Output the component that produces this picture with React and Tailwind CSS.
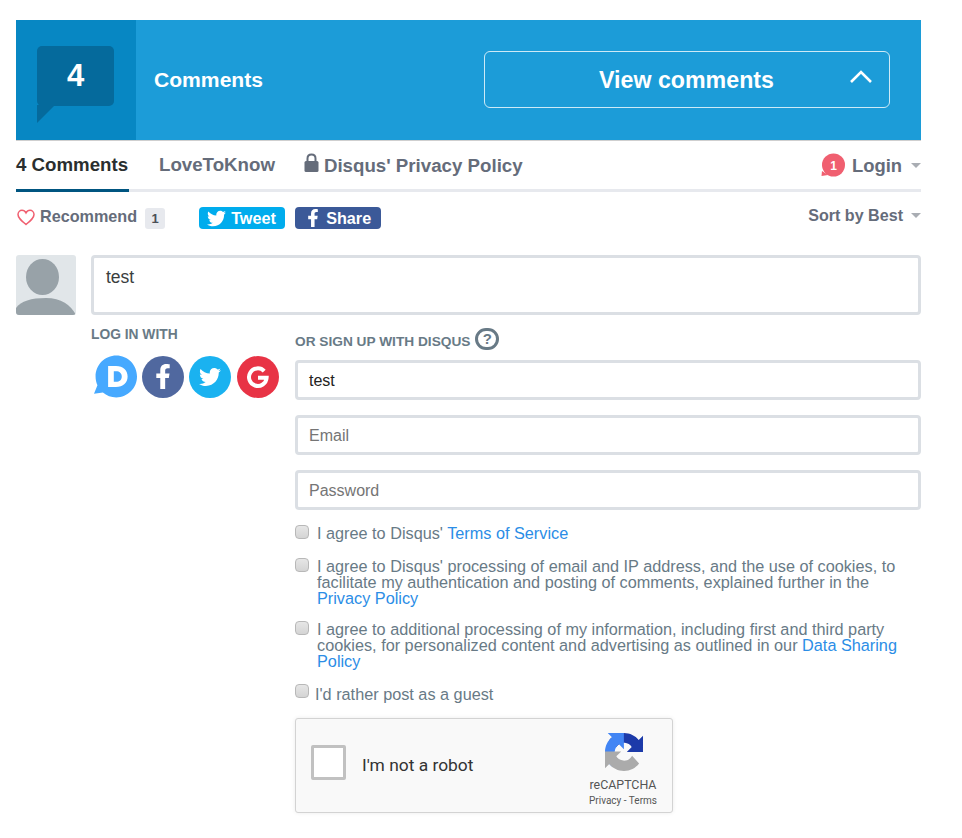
import React from "react";
import { FaTwitter, FaFacebookF } from "react-icons/fa";
import { SiDisqus } from "react-icons/si";

function Caret() {
  return <span className="w-0 h-0 border-x-[5px] border-x-transparent border-t-[5px] border-t-[#a9adb3] inline-block" />;
}

function Box() {
  return <span className="w-[14px] h-[14px] shrink-0 rounded-[4px] border border-[#b8b8b8] bg-gradient-to-b from-[#e6e6e6] to-[#d4d4d4]" />;
}

function Check({ children }) {
  return (
    <div className="flex items-start">
      <Box />
      <p className="ml-[8px] text-[16.25px] leading-[16px] text-[#687a86]">{children}</p>
    </div>
  );
}

const A = ({ children }) => <span className="text-[#2b8de6]">{children}</span>;

function Field({ placeholder, value }) {
  return (
    <div className={`h-[40px] border-[3px] border-[#dbdfe4] rounded-[4px] px-[11px] pt-[1px] flex items-center text-[16px] ${value ? "text-[#222]" : "text-[#757575]"}`}>
      {value || placeholder}
    </div>
  );
}

export default function App() {
  return (
    <div className="w-[962px] h-[838px] bg-white overflow-hidden pl-[16px] pt-[20px] font-['Liberation_Sans',Arial,sans-serif]">
      <div className="w-[905px]">
        <div className="h-[121px] bg-[#1c9cd8] border-b border-[#cfcfcf] flex items-stretch">
          <div className="w-[120px] h-[120px] bg-[#0787c3] pl-[21px] pt-[26px] shrink-0">
            <div className="relative w-[77px] h-[60px] bg-[#056a9c] rounded-[5px] flex items-center justify-center text-white font-bold text-[31px]">
              4
              <svg className="absolute left-0 top-[59px]" width="19" height="19" viewBox="0 0 19 19">
                <path d="M0 0H18L0 18Z" fill="#056a9c" />
              </svg>
            </div>
          </div>
          <div className="flex-1 flex items-center pl-[18px] pr-[31px] h-[120px]">
            <span className="text-white font-bold text-[21.1px]">Comments</span>
            <div className="ml-auto relative w-[406px] h-[57px] border border-[#cdeaf7] rounded-[6px] flex items-center justify-center pt-[2px] pr-[1px] text-white font-bold text-[23.2px] top-[-1px]">
              View comments
              <svg className="absolute right-[16px] top-[17px]" width="24" height="15" viewBox="0 0 24 15">
                <path d="M2 13L12 3L22 13" fill="none" stroke="white" strokeWidth="2.6" />
              </svg>
            </div>
          </div>
        </div>

        <div className="h-[51px] border-b-[3px] border-[#e7e9ee] flex items-start text-[18.7px] font-bold text-[#656c7a]">
          <div className="w-[113px] h-[51px] border-b-[3px] border-[#005580] text-[#2a2e2e] pt-[13px] leading-[21px] shrink-0 whitespace-nowrap">4 Comments</div>
          <div className="ml-[30px] pt-[13px] leading-[21px]">LoveToKnow</div>
          <div className="ml-[29px] pt-[14px] leading-[21px] flex">
            <svg width="15" height="20" viewBox="0 0 15 20" className="mt-[-2px] mr-[5px]">
              <path d="M3.500 9V5.500C3.500 3 5 1.500 7.500 1.500C10 1.500 11.500 3 11.500 5.500V9" fill="none" stroke="#656c7a" strokeWidth="2" />
              <rect x="0.500" y="8" width="14" height="11" rx="1.500" fill="#656c7a" />
            </svg>
            <span>Disqus' Privacy Policy</span>
          </div>
          <div className="ml-auto flex items-center pt-[12px] leading-[21px] text-[18.4px]">
            <svg width="24" height="24" viewBox="0 0 24 24" className="mr-[7px]">
              <circle cx="12.5" cy="12" r="11.500" fill="#f05f70" />
              <path d="M1 18L0.500 23L7 22Z" fill="#f05f70" />
              <text x="12.5" y="16.5" textAnchor="middle" fontSize="12" fontWeight="700" fill="white" fontFamily="Liberation Sans">1</text>
            </svg>
            <span>Login</span>
            <span className="ml-[9px] flex"><Caret /></span>
          </div>
        </div>

        <div className="h-[63px] flex items-start pt-[15px]">
          <svg width="18" height="17" viewBox="0 0 18 17" className="mt-[2px] ml-[1px]">
            <path d="M9 15.500C4 11.500 1 9 1 5.500C1 3 3 1.200 5 1.200C6.800 1.200 8.200 2.200 9 3.800C9.800 2.200 11.200 1.200 13 1.200C15 1.200 17 3 17 5.500C17 9 14 11.500 9 15.500Z" fill="none" stroke="#f05f70" strokeWidth="1.500" />
          </svg>
          <span className="ml-[5px] mt-[-1px] text-[16.2px] font-bold text-[#656c7a] leading-[20px]">Recommend</span>
          <span className="ml-[8px] mt-[1px] w-[20px] h-[21px] bg-[#e7e9ee] rounded-[3px] text-[13px] font-bold text-[#4a4f57] flex items-center justify-center">1</span>
          <div className="ml-[34px] w-[86px] h-[22px] rounded-[4px] bg-[#00aced] text-white font-bold text-[16.2px] flex items-center pl-[8px]">
            <FaTwitter className="w-[19px] h-[19px] mr-[5px]" />Tweet
          </div>
          <div className="ml-[10px] w-[86px] h-[22px] rounded-[4px] bg-[#3b5998] text-white font-bold text-[16.2px] flex items-center pl-[11px]">
            <FaFacebookF className="w-[14px] h-[18px] mr-[6px]" />Share
          </div>
          <div className="ml-auto flex items-center mt-[-1px] text-[16.1px] font-bold text-[#656c7a] leading-[18px]">
            <span>Sort by Best</span>
            <span className="ml-[8px] flex"><Caret /></span>
          </div>
        </div>

        <div className="flex">
          <div className="w-[60px] h-[60px] rounded-[3px] bg-[#e1e6e9] overflow-hidden shrink-0">
            <svg width="60" height="60" viewBox="0 0 60 60">
              <ellipse cx="26.500" cy="22" rx="16.500" ry="18" fill="#98a2a8" />
              <path d="M0 60V53C5 46 15 43 30 43C45 43 55 50 60 60Z" fill="#98a2a8" />
            </svg>
          </div>
          <div className="ml-[15px] flex-1">
            <div className="h-[60px] border-[3px] border-[#dbdfe4] rounded-[4px] px-[12px] pt-[10px] text-[17.5px] leading-[18px] text-[#3a3e3e]">test</div>
            <div className="flex">
              <div className="w-[204px] shrink-0 pt-[12px]">
                <div className="text-[13.8px] font-bold text-[#687a86] leading-[15px]">LOG IN WITH</div>
                <div className="flex mt-[13px] ml-[3px] gap-[5px] items-center">
                  <SiDisqus className="w-[43px] h-[43px] text-[#46a9ff]" />
                  <span className="w-[42px] h-[42px] rounded-full bg-[#50689f] text-white flex items-center justify-center"><FaFacebookF className="w-[24px] h-[25px]" /></span>
                  <span className="w-[42px] h-[42px] rounded-full bg-[#1ab2f0] text-white flex items-center justify-center"><FaTwitter className="w-[22px] h-[22px]" /></span>
                  <span className="ml-[1px] w-[42px] h-[42px] rounded-full bg-[#e83345] flex items-center justify-center">
                    <svg width="24" height="24" viewBox="0 0 24 24">
                      <path d="M18.200 6.100A8.800 8.800 0 1 0 20.600 12.800H12" fill="none" stroke="white" strokeWidth="4" />
                    </svg>
                  </span>
                </div>
              </div>
              <div className="flex-1 pt-[12px]">
                <div className="h-[33px] flex items-start text-[13.7px] font-bold text-[#687a86]">
                  <span className="mt-[7px] leading-[15px] whitespace-nowrap">OR SIGN UP WITH DISQUS</span>
                  <span className="ml-[5px] mt-[1px] w-[24px] h-[22px] rounded-full border-[3px] border-[#687a86] flex items-center justify-center text-[15px]">?</span>
                </div>
                <div className="flex flex-col gap-[15px]">
                  <Field value="test" />
                  <Field placeholder="Email" />
                  <Field placeholder="Password" />
                </div>
                <div className="mt-[15px] flex flex-col">
                  <Check><span>I agree to Disqus' </span><A>Terms of Service</A></Check>
                  <div className="mt-[17px]"><Check>I agree to Disqus' processing of email and IP address, and the use of cookies, to facilitate my authentication and posting of comments, explained further in the <A>Privacy Policy</A></Check></div>
                  <div className="mt-[15px]"><Check>I agree to additional processing of my information, including first and third party cookies, for personalized content and advertising as outlined in our <A>Data Sharing Policy</A></Check></div>
                  <div className="mt-[15px] flex items-start">
                    <Box />
                    <p className="ml-[6px] mt-[2px] text-[16.25px] leading-[16px] text-[#687a86]">I'd rather post as a guest</p>
                  </div>
                </div>
                <div className="mt-[16px] w-[378px] h-[95px] rounded-[3px] border border-[#d3d3d3] bg-[#f9f9f9] shadow-[0_0_4px_rgba(0,0,0,0.08)] flex items-start font-['Roboto',sans-serif]">
                  <span className="ml-[15px] mt-[26px] w-[35px] h-[35px] bg-white border-[3px] border-[#c1c1c1] rounded-[2px] shrink-0" />
                  <span className="ml-[16px] mt-[36px] text-[17.4px] leading-[20px] text-[#333]">I'm not a robot</span>
                  <div className="ml-auto mr-[14px] flex flex-col items-center pt-[14px] w-[70px]">
                    <svg width="38" height="38" viewBox="0 0 64 64" className="ml-[1px]">
                      <path d="M64 31.955l-.033-1.37V4.687l-7.16 7.16C50.948 4.674 42.033.093 32.05.093c-10.4 0-19.622 4.96-25.458 12.64l11.736 11.86a15.55 15.55 0 0 1 4.754-5.334c2.05-1.6 4.952-2.906 8.968-2.906.485 0 .86.057 1.135.163 4.976.393 9.288 3.14 11.828 7.124l-8.307 8.307c10.522-.04 22.4-.066 27.295.005" fill="#1c3aa9" />
                      <path d="M31.862.002l-1.37.033H4.594l7.16 7.16C4.58 13.054 0 21.97 0 31.953c0 10.4 4.96 19.622 12.64 25.458L24.5 45.676a15.55 15.55 0 0 1-5.334-4.754c-1.6-2.05-2.906-4.952-2.906-8.968 0-.485.057-.86.163-1.135.393-4.976 3.14-9.288 7.124-11.828l8.307 8.307c-.04-10.522-.066-22.4.005-27.295" fill="#4285f4" />
                      <path d="M.002 31.953l.033 1.37v25.898l7.16-7.16c5.86 7.173 14.775 11.754 24.76 11.754 10.4 0 19.622-4.96 25.458-12.64L45.677 38.32a15.55 15.55 0 0 1-4.754 5.334c-2.05 1.6-4.952 2.906-8.968 2.906-.485 0-.86-.057-1.135-.163-4.976-.393-9.288-3.14-11.828-7.124l8.307-8.307c-10.522.04-22.4.066-27.295-.005" fill="#ababab" />
                    </svg>
                    <span className="text-[12.4px] leading-[14px] text-[#555] mt-[7px]">reCAPTCHA</span>
                    <span className="text-[10px] leading-[11px] text-[#555] mt-[3px] whitespace-nowrap">Privacy - Terms</span>
                  </div>
                </div>
              </div>
            </div>
          </div>
        </div>
      </div>
    </div>
  );
}
